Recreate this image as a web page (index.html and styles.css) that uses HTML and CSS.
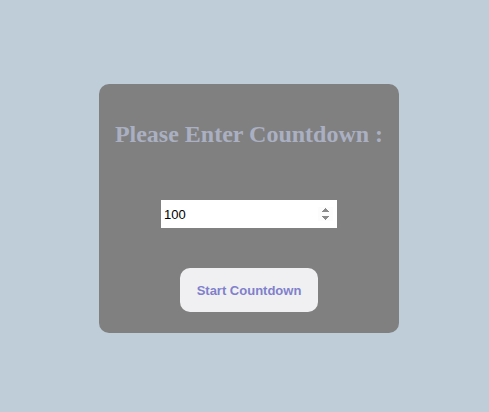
FILE: index.html
```html
<!DOCTYPE html>
<html>
<head>
<meta charset="utf-8">
<link rel="stylesheet" href="styles.css">
</head>
<body>
<div class="page">
  <div class="card">
    <h2 class="title">Please Enter Countdown :</h2>
    <input class="count" type="number" value="100" autofocus>
    <button class="start">Start Countdown</button>
  </div>
</div>
</body>
</html>
```
FILE: styles.css
```css
html, body {
  margin: 0;
  padding: 0;
  background: #bfcdd8;
}
.page {
  display: flex;
  justify-content: flex-start;
  padding: 84px 0 0 99px;
}
.card {
  width: 300px;
  height: 249px;
  box-sizing: border-box;
  background: #808080;
  border-radius: 10px;
  display: flex;
  flex-direction: column;
  align-items: center;
  padding-top: 36px;
}
.title {
  margin: 0;
  font-family: "Liberation Serif", serif;
  font-size: 24px;
  font-weight: bold;
  color: #aab0c2;
  line-height: 28px;
}
.count {
  margin-top: 52px;
  width: 176px;
  height: 28px;
  box-sizing: border-box;
  border: none;
  outline: none;
  padding: 0 4px 0 3px;
  font-family: "Liberation Sans", Arial, sans-serif;
  font-size: 13px;
  color: #000;
  background: #fff;
}
.start {
  margin-top: 40px;
  width: 138px;
  height: 44px;
  border: none;
  border-radius: 10px;
  background: #f0f0f2;
  color: #8080cc;
  font-family: "Liberation Sans", Arial, sans-serif;
  font-size: 13px;
  font-weight: bold;
}
```
